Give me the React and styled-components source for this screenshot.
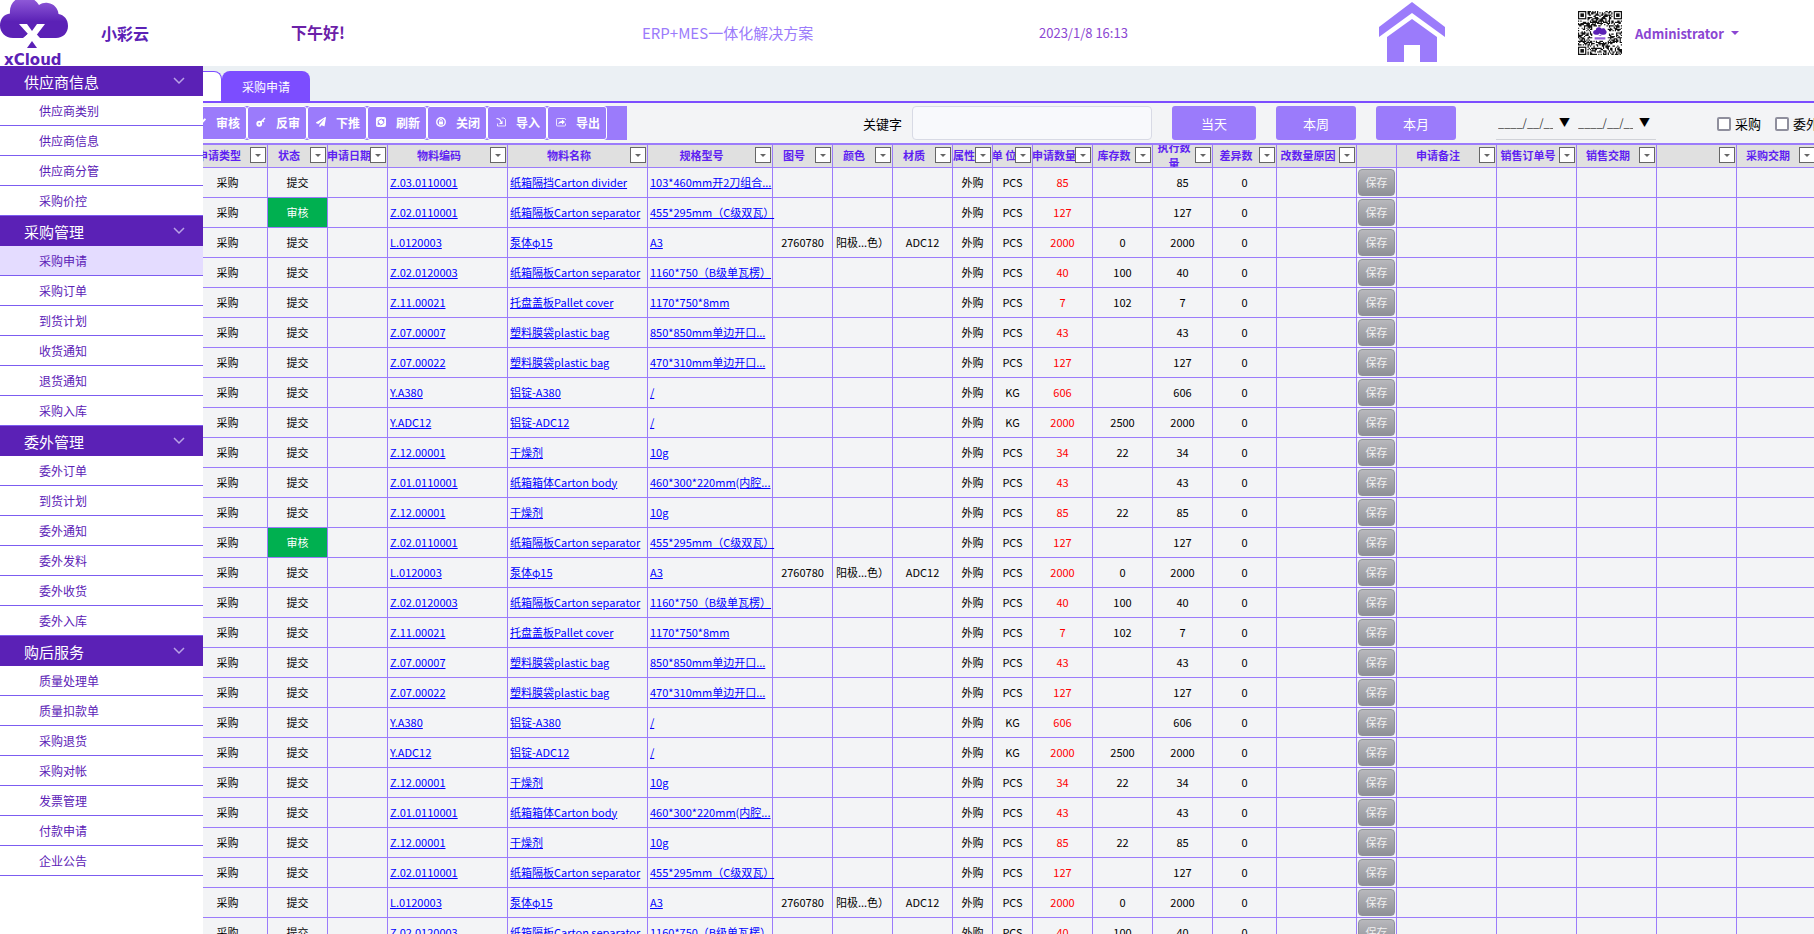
import React from 'react'
import styled, { createGlobalStyle, css } from 'styled-components'
import { FaCheck, FaPaperPlane } from 'react-icons/fa'

const menu = [
    { title: '供应商信息', items: ['供应商类别', '供应商信息', '供应商分管', '采购价控'] },
    { title: '采购管理', items: ['采购申请', '采购订单', '到货计划', '收货通知', '退货通知', '采购入库'] },
    { title: '委外管理', items: ['委外订单', '到货计划', '委外通知', '委外发料', '委外收货', '委外入库'] },
    { title: '购后服务', items: ['质量处理单', '质量扣款单', '采购退货', '采购对帐', '发票管理', '付款申请', '企业公告'] },
]

const columns = [
    { key: 'type', title: '申请类型', width: 80 },
    { key: 'status', title: '状态', width: 60 },
    { key: 'date', title: '申请日期', width: 60 },
    { key: 'code', title: '物料编码', width: 120, link: true },
    { key: 'name', title: '物料名称', width: 140, link: true },
    { key: 'spec', title: '规格型号', width: 125, link: true },
    { key: 'drawing', title: '图号', width: 60 },
    { key: 'color', title: '颜色', width: 60 },
    { key: 'material', title: '材质', width: 60 },
    { key: 'attr', title: '属性', width: 40 },
    { key: 'unit', title: '单 位', width: 40 },
    { key: 'qty', title: '申请数量', width: 60, red: true },
    { key: 'stock', title: '库存数', width: 60 },
    { key: 'done', title: '执行数量', width: 60, wrap: true },
    { key: 'diff', title: '差异数', width: 64 },
    { key: 'reason', title: '改数量原因', width: 80 },
    { key: 'save', title: '', width: 40, noFilter: true },
    { key: 'remark', title: '申请备注', width: 100 },
    { key: 'order', title: '销售订单号', width: 80 },
    { key: 'saleDate', title: '销售交期', width: 80 },
    { key: 'blank', title: '', width: 80 },
    { key: 'buyDate', title: '采购交期', width: 80 },
]

const divider = { code: 'Z.03.0110001', name: '纸箱隔挡Carton divider', spec: '103*460mm开2刀组合...', unit: 'PCS', qty: 85 }

const cycle = [
    { code: 'Z.02.0110001', name: '纸箱隔板Carton separator', spec: '455*295mm（C级双瓦）', unit: 'PCS', qty: 127 },
    { code: 'L.0120003', name: '泵体φ15', spec: 'A3', drawing: '2760780', color: '阳极...色）', material: 'ADC12', unit: 'PCS', qty: 2000, stock: 0 },
    { code: 'Z.02.0120003', name: '纸箱隔板Carton separator', spec: '1160*750（B级单瓦楞）', unit: 'PCS', qty: 40, stock: 100 },
    { code: 'Z.11.00021', name: '托盘盖板Pallet cover', spec: '1170*750*8mm', unit: 'PCS', qty: 7, stock: 102 },
    { code: 'Z.07.00007', name: '塑料膜袋plastic bag', spec: '850*850mm单边开口...', unit: 'PCS', qty: 43 },
    { code: 'Z.07.00022', name: '塑料膜袋plastic bag', spec: '470*310mm单边开口...', unit: 'PCS', qty: 127 },
    { code: 'Y.A380', name: '铝锭-A380', spec: '/', unit: 'KG', qty: 606 },
    { code: 'Y.ADC12', name: '铝锭-ADC12', spec: '/', unit: 'KG', qty: 2000, stock: 2500 },
    { code: 'Z.12.00001', name: '干燥剂', spec: '10g', unit: 'PCS', qty: 34, stock: 22 },
    { code: 'Z.01.0110001', name: '纸箱箱体Carton body', spec: '460*300*220mm(内腔...', unit: 'PCS', qty: 43 },
    { code: 'Z.12.00001', name: '干燥剂', spec: '10g', unit: 'PCS', qty: 85, stock: 22 },
]

const rows = [divider, ...cycle, ...cycle, ...cycle.slice(0, 3)].map((row, i) => ({
    ...row,
    type: '采购',
    status: i === 1 || i === 12 ? '审核' : '提交',
    attr: '外购',
    done: row.qty,
    diff: 0,
}))

function KeyIcon() {
    return (
        <svg viewBox="0 0 20 20" width="10" height="10" fill="none" stroke="#fff">
            <circle cx="6.500" cy="13.500" r="3.800" strokeWidth="4" />
            <path d="M9 11l9-9M13 7l3 3" strokeWidth="3" />
        </svg>
    )
}

function RefreshIcon() {
    return (
        <svg viewBox="0 0 20 20" width="10" height="10">
            <rect width="20" height="20" rx="4" fill="#fff" />
            <path d="M5 13a6 6 0 0 1 9.500-7M15 7a6 6 0 0 1-9.500 7" fill="none" stroke="#9b7bfb" strokeWidth="2" />
            <path d="M16.500 3v5h-5zM3.500 17v-5h5z" fill="#9b7bfb" />
        </svg>
    )
}

function LockIcon() {
    return (
        <svg viewBox="0 0 20 20" width="10" height="10" fill="none" stroke="#fff">
            <circle cx="10" cy="10" r="8.500" strokeWidth="2.800" />
            <path d="M7.500 9V7.500a2.500 2.500 0 0 1 5 0V9" strokeWidth="2" />
            <rect x="6" y="9" width="8" height="6" fill="#fff" stroke="none" />
        </svg>
    )
}

function ImportIcon() {
    return (
        <svg viewBox="0 0 20 20" width="10" height="10" fill="none" stroke="#fff" strokeWidth="1.600">
            <path d="M11 2h5l3 3v13H3v-5" />
            <path d="M1 3c5 0 8 2 9 7" strokeWidth="2.400" />
            <path d="M13 7v7H6z" fill="#fff" stroke="none" />
        </svg>
    )
}

function ExportIcon() {
    return (
        <svg viewBox="0 0 20 20" width="10" height="10" fill="none" stroke="#fff" strokeWidth="1.600">
            <path d="M19 13v3a2 2 0 0 1-2 2H3a2 2 0 0 1-2-2V5a2 2 0 0 1 2-2h14a2 2 0 0 1 2 2v1" />
            <path d="M4 15c1-5 4-7 8-7V5l6 5-6 5v-3c-3 0-6 0-8 3z" fill="#fff" stroke="none" />
        </svg>
    )
}

const actions = [
    { label: '审核', icon: <FaCheck /> },
    { label: '反审', icon: <KeyIcon /> },
    { label: '下推', icon: <FaPaperPlane /> },
    { label: '刷新', icon: <RefreshIcon /> },
    { label: '关闭', icon: <LockIcon /> },
    { label: '导入', icon: <ImportIcon /> },
    { label: '导出', icon: <ExportIcon /> },
]

function Logo() {
    return (
        <svg width="70" height="66" viewBox="0 0 70 66" role="img" aria-label="xCloud">
            <defs>
                <linearGradient id="cloud" x1="0" y1="0" x2="0" y2="1">
                    <stop offset="0" stopColor="#9560dc" />
                    <stop offset="0.600" stopColor="#5b21b6" />
                </linearGradient>
            </defs>
            <path
                d="M13 38C5 38 0 32 0 25.500 0 19 4 14 10 13.500 9 5 15-3 24-3c7 0 12 3 15 8 3-2 6-2.500 9-2 6 1 10 5 10.500 11C64 15 68 19 68 26c0 7-5 12-12 12H39l-7-6-7 6z"
                fill="url(#cloud)"
            />
            <path d="M19 24h8l5 7 5-7h8L32 41 26 38h-3l5-4z" fill="#fff" />
            <path d="M24 38l4.500-5 7 0L40 38z" fill="#fff" />
            <path d="M32 41l5 7H27z" fill="#5b21b6" />
            <text x="4" y="65" fontFamily="DejaVu Sans, sans-serif" fontWeight="700" fontSize="15" fill="#5b21b6">xCloud</text>
        </svg>
    )
}

function HomeIcon() {
    return (
        <svg width="66" height="60" viewBox="0 0 66 60" fill="#9b7bfb">
            <path d="M33 0l33 25v10L33 11 0 35V25z" />
            <path d="M33 17l25 18v25H41V43H25v17H8V35z" />
        </svg>
    )
}

// 37x37 modules, the noise comes from a small seeded generator
function buildModules() {
    const size = 37
    let seed = 20230108
    let d = ''
    for (let y = 0; y < size; y++) {
        for (let x = 0; x < size; x++) {
            seed = (seed * 1103515245 + 12345) % 2147483648
            const finder = (x < 8 && y < 8) || (x > 28 && y < 8) || (x < 8 && y > 28)
            const center = x > 11 && x < 25 && y > 12 && y < 25
            if (!finder && !center && seed / 2147483648 > 0.48) d += `M${x} ${y}h1v1h-1z`
        }
    }
    return d
}
const modules = buildModules()

function QrCode() {
    return (
        <svg width="44" height="44" viewBox="0 0 37 37" role="img" aria-label="QR">
            <path d={modules} fill="#111" />
            {[[0, 0], [30, 0], [0, 30]].map(([x, y]) => (
                <g key={`${x}-${y}`}>
                    <rect x={x} y={y} width="7" height="7" fill="#111" />
                    <rect x={x + 1} y={y + 1} width="5" height="5" fill="#fff" />
                    <rect x={x + 2} y={y + 2} width="3" height="3" fill="#111" />
                </g>
            ))}
            <path d="M15 20c-3 0-3-4 0-4 0-3 4-3 5-1 2-1 3 0 3 1 2 1 1 4-1 4h-2l-2-1-1 1z" fill="#5b21b6" />
            <path d="M17 21h3l-1-1zM14 22h9v2h-9z" fill="#9560dc" />
        </svg>
    )
}

function Chevron() {
    return (
        <svg width="12" height="8" viewBox="0 0 12 8" fill="none" stroke="#b9a3e6" strokeWidth="1.500">
            <path d="M1 1l5 5 5-5" />
        </svg>
    )
}

function Sidebar() {
    return (
        <SidebarStyled>
            {menu.map((group, g) => (
                <section key={group.title}>
                    <GroupButton type="button">
                        {group.title}
                        <Chevron />
                    </GroupButton>
                    {group.items.map((item, i) => (
                        <MenuLink href="#" key={item} $active={g === 1 && i === 0}>{item}</MenuLink>
                    ))}
                </section>
            ))}
        </SidebarStyled>
    )
}

function RequestTable() {
    return (
        <Table>
            <colgroup>
                {columns.map((col) => <Col key={col.key} $width={col.width} />)}
            </colgroup>
            <thead>
                <tr>
                    {columns.map((col) => (
                        <Th key={col.key}>
                            <HeadCell>
                                <HeadLabel $wrap={col.wrap}>{col.title}</HeadLabel>
                                {!col.noFilter && <FilterButton type="button" aria-label={`${col.title}筛选`}><Caret /></FilterButton>}
                            </HeadCell>
                        </Th>
                    ))}
                </tr>
            </thead>
            <tbody>
                {rows.map((row, i) => (
                    <tr key={i}>
                        {columns.map((col) => {
                            if (col.key === 'save') return <SaveCell key={col.key}><SaveButton type="button">保存</SaveButton></SaveCell>
                            return (
                                <Td key={col.key} $left={col.link} $red={col.red} $green={row[col.key] === '审核'}>
                                    {col.link ? <a href="#">{row[col.key]}</a> : row[col.key]}
                                </Td>
                            )
                        })}
                    </tr>
                ))}
            </tbody>
        </Table>
    )
}

function App() {
    return (
        <>
            <GlobalStyle />
            <Page>
                <TopBar>
                    <Logo />
                    <Brand>小彩云</Brand>
                    <Greeting>下午好!</Greeting>
                    <Slogan>ERP+MES一体化解决方案</Slogan>
                    <Clock>2023/1/8 16:13</Clock>
                    <HomeLink href="#" aria-label="首页"><HomeIcon /></HomeLink>
                    <QrCode />
                    <UserButton type="button">Administrator <Caret $user /></UserButton>
                </TopBar>
                <Body>
                    <Sidebar />
                    <Main>
                        <Content>
                            <TabBar>
                                <Tab type="button" aria-label="首页" $home />
                                <Tab type="button">采购申请</Tab>
                            </TabBar>
                            <Toolbar>
                                <Actions>
                                    {actions.map((a) => (
                                        <ActionButton type="button" key={a.label}>{a.icon}{a.label}</ActionButton>
                                    ))}
                                </Actions>
                                <Keyword>
                                    关键字
                                    <input type="text" />
                                </Keyword>
                                <Ranges>
                                    <RangeButton type="button" $wide>当天</RangeButton>
                                    <RangeButton type="button">本周</RangeButton>
                                    <RangeButton type="button">本月</RangeButton>
                                </Ranges>
                                <Dates>
                                    {['开始日期', '结束日期'].map((label) => (
                                        <DateField key={label}>
                                            <input type="text" aria-label={label} defaultValue="____/__/__" />
                                            <DateArrow type="button" aria-label={`选择${label}`}>▼</DateArrow>
                                        </DateField>
                                    ))}
                                </Dates>
                                <Checks>
                                    <CheckLabel><input type="checkbox" />采购</CheckLabel>
                                    <CheckLabel><input type="checkbox" />委外</CheckLabel>
                                </Checks>
                            </Toolbar>
                            <RequestTable />
                        </Content>
                    </Main>
                </Body>
            </Page>
        </>
    )
}

const GlobalStyle = createGlobalStyle`
    * { box-sizing: border-box; }
    body {
        margin: 0;
        overflow: hidden;
        background: #fff;
        font-family: "Noto Sans CJK SC", sans-serif;
        font-size: 13px;
    }
    button, input { font-family: inherit; padding: 0; }
    button { border: 0; background: none; cursor: pointer; }
`;

const Page = styled.div`
    display: flex;
    flex-direction: column;
    height: 100vh;
`;

const TopBar = styled.header`
    display: grid;
    grid-template-columns: 101fr 190fr 351fr 397fr 340fr 199fr 57fr 179fr;
    align-items: center;
    flex: none;
    height: 66px;
    background: #fff;
    white-space: nowrap;
`;

const Brand = styled.strong`
    font-size: 16px;
    font-weight: 700;
    color: #5b21b6;
`;

const Greeting = styled.span`
    padding-bottom: 2px;
    font-size: 16px;
    font-weight: 700;
    color: #6b21a8;
`;

const Slogan = styled.span`
    padding-bottom: 2px;
    font-size: 15px;
    color: #9b7bfb;
`;

const Clock = styled.time`
    padding-bottom: 2px;
    font-size: 13px;
    color: #8b46d2;
`;

const HomeLink = styled.a`
    display: flex;
    padding-bottom: 2px;
`;

const UserButton = styled.button`
    display: flex;
    align-items: center;
    gap: 7px;
    font-size: 13px;
    font-weight: 700;
    color: #8b46d2;
`;

const Caret = styled.i`
    border: solid transparent;
    border-width: 3px 3px 0;
    border-top-color: #666;
    ${({ $user }) => $user && css`
        border-width: 4px 4px 0;
        border-top-color: #8b46d2;
    `}
`;

const Body = styled.div`
    display: flex;
    flex: 1;
    min-height: 0;
`;

const SidebarStyled = styled.nav`
    flex: none;
    width: 203px;
    background: #fff;
    overflow: hidden;
`;

const GroupButton = styled.button`
    display: flex;
    justify-content: space-between;
    align-items: center;
    width: 100%;
    height: 30px;
    padding: 0 18px 0 24px;
    background: #5b21b6;
    color: #fff;
    font-size: 15px;
`;

const MenuLink = styled.a`
    display: flex;
    align-items: center;
    height: 30px;
    padding: 0 0 1px 39px;
    border-bottom: 1px solid #7c5cf0;
    background: ${({ $active }) => ($active ? '#e4dcff' : '#fff')};
    color: #5b21b6;
    font-size: 12px;
    text-decoration: none;
`;

const Main = styled.main`
    flex: 1;
    min-width: 0;
    overflow: hidden;
    background: #f3f4f6;
`;

/* the sheet is scrolled a little to the right, under the menu */
const Content = styled.div`
    margin-left: -16px;
`;

const TabBar = styled.div`
    display: flex;
    align-items: flex-end;
    height: 37px;
    background: #ebf0f4;
    border-bottom: 2px solid #7c4dff;
`;

const Tab = styled.button`
    width: 88px;
    height: 30px;
    border-radius: 8px 8px 0 0;
    background: #7c4dff;
    color: #fff;
    font-size: 12px;
    ${({ $home }) => $home && css`
        width: 35px;
        background: #fff;
        border: 1px solid #7c4dff;
        border-bottom: 0;
    `}
`;

const Toolbar = styled.div`
    display: flex;
    align-items: center;
    height: 42px;
    padding: 3px 0;
    border-bottom: 2px solid #9b7bfb;
    white-space: nowrap;
    > * { flex: none; }
`;

const Actions = styled.div`
    display: flex;
    width: 440px;
    height: 34px;
    background: #9b7bfb;
`;

const ActionButton = styled.button`
    display: flex;
    align-items: center;
    gap: 10px;
    width: 60px;
    height: 34px;
    padding: 0 0 2px 8px;
    border: 1px solid #fff;
    border-radius: 3px;
    color: #fff;
    font-size: 12px;
    font-weight: 700;
    svg { flex: none; width: 10px; height: 10px; }
`;

const Keyword = styled.label`
    display: flex;
    align-items: center;
    gap: 10px;
    margin-left: 236px;
    color: #000;
    font-size: 13px;
    input {
        width: 240px;
        height: 34px;
        padding: 0 8px;
        border: 1px solid #d8dae5;
        border-radius: 4px;
        background: #f8f9fc;
    }
`;

const Ranges = styled.div`
    display: flex;
    gap: 20px;
    margin-left: 20px;
`;

const RangeButton = styled.button`
    width: ${({ $wide }) => ($wide ? 84 : 80)}px;
    height: 34px;
    border-radius: 3px;
    background: #9b7bfb;
    color: #fff;
    font-size: 13px;
`;

const Dates = styled.div`
    display: flex;
    height: 34px;
    margin-left: 40px;
    border-bottom: 1px solid #d0d2d8;
`;

const DateField = styled.div`
    display: flex;
    align-items: center;
    width: 80px;
    padding: 0 0 2px 2px;
    input {
        width: 55px;
        border: 0;
        background: none;
        color: #333;
        font-size: 11px;
    }
`;

const DateArrow = styled.button`
    width: 23px;
    color: #000;
    font-size: 11px;
`;

const Checks = styled.div`
    display: flex;
    gap: 14px;
    margin-left: 61px;
`;

const CheckLabel = styled.label`
    display: flex;
    align-items: center;
    gap: 4px;
    color: #000;
    font-size: 13px;
    input {
        appearance: none;
        width: 14px;
        height: 14px;
        margin: 1px 0 0;
        border: 2px solid #8f8f9d;
        border-radius: 2px;
        background: #fff;
        &:checked { background: #7c4dff; }
    }
`;

const Table = styled.table`
    width: calc(100% - 1px);
    min-width: 1629px;
    margin-left: 1px;
    table-layout: fixed;
    border-collapse: separate;
    border-spacing: 0;
    font-size: 11px;
    line-height: 16px;
`;

const Col = styled.col`
    width: ${({ $width }) => $width}px;
`;

const Th = styled.th`
    height: 23px;
    padding: 0;
    border-right: 1px solid #9b7bfb;
    border-bottom: 1px solid #9b7bfb;
    background: #e0e0e0;
    color: #5e1ff2;
    font-weight: 700;
`;

const HeadCell = styled.div`
    display: flex;
    align-items: center;
    height: 22px;
    padding: 0 1px 2px 0;
    overflow: hidden;
`;

const HeadLabel = styled.span`
    flex: 1;
    display: flex;
    justify-content: center;
    min-width: 0;
    text-align: center;
    white-space: nowrap;
    ${({ $wrap }) => $wrap && css`
        display: block;
        padding: 0 4px;
        white-space: normal;
    `}
`;

const FilterButton = styled.button`
    display: flex;
    flex: none;
    align-items: center;
    justify-content: center;
    width: 16px;
    height: 16px;
    border: 1px solid #666;
    background: #fff;
`;

const Td = styled.td`
    height: 30px;
    padding: 0 ${({ $left }) => ($left ? 2 : 0)}px 2px;
    border-right: 1px solid #9b7bfb;
    border-bottom: 1px solid #9b7bfb;
    background: ${({ $green }) => ($green ? '#00b050' : '#f3f4f6')};
    color: ${({ $green, $red }) => ($green ? '#fff' : $red ? '#f00' : '#000')};
    text-align: ${({ $left }) => ($left ? 'left' : 'center')};
    white-space: nowrap;
    a { color: #00f; }
`;

const SaveCell = styled(Td)`
    padding: 0;
`;

const SaveButton = styled.button`
    display: block;
    width: 37px;
    height: 27px;
    margin: 0 auto;
    padding-bottom: 1px;
    border: 1px solid #8f949b;
    border-radius: 4px;
    background: linear-gradient(#b8b8bc, #8e9097);
    color: #f0f0f0;
    font-size: 11px;
`;

export default App
